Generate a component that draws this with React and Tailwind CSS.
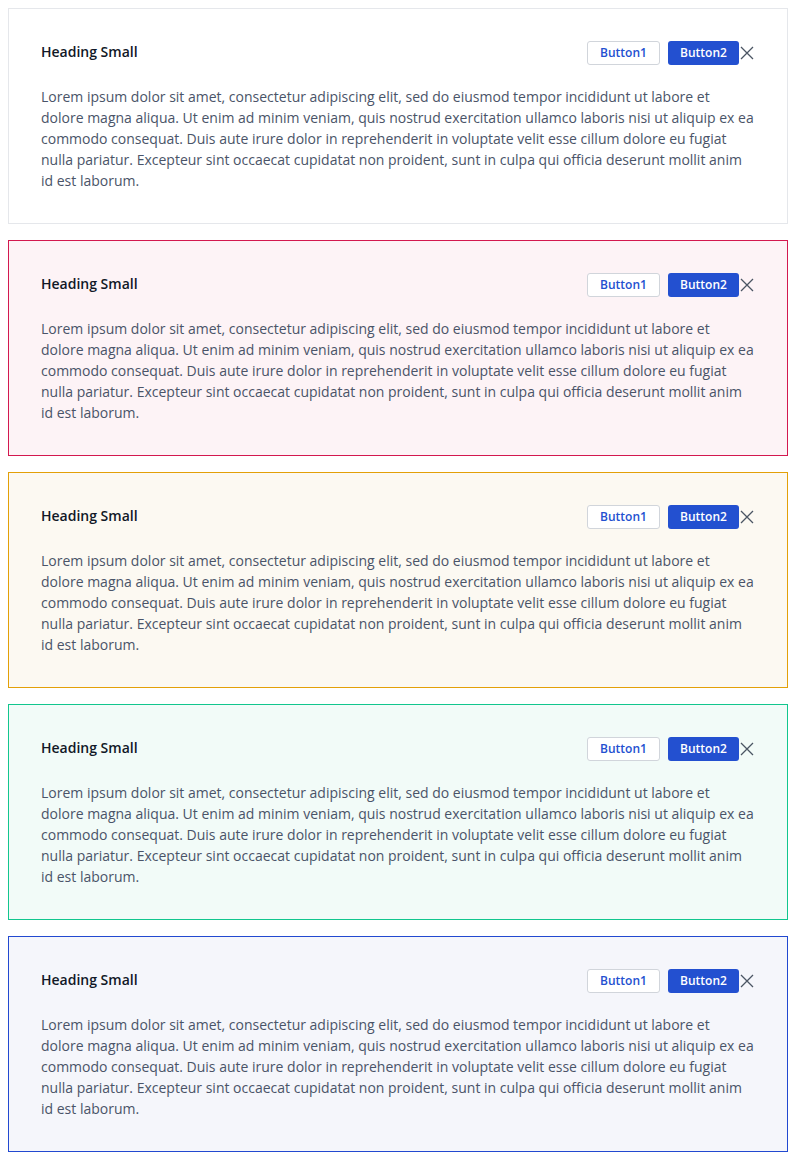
import React from "react";

const LOREM =
  "Lorem ipsum dolor sit amet, consectetur adipiscing elit, sed do eiusmod tempor incididunt ut labore et dolore magna aliqua. Ut enim ad minim veniam, quis nostrud exercitation ullamco laboris nisi ut aliquip ex ea commodo consequat. Duis aute irure dolor in reprehenderit in voluptate velit esse cillum dolore eu fugiat nulla pariatur. Excepteur sint occaecat cupidatat non proident, sunt in culpa qui officia deserunt mollit anim id est laborum.";

// one entry per alert variant
const VARIANTS = [
  { id: "default", box: "border-[#e5e7eb] bg-white" },
  { id: "danger", box: "border-[#d3184f] bg-[#fdf3f6]" },
  { id: "warning", box: "border-[#e3a008] bg-[#fcf9f2]" },
  { id: "success", box: "border-[#12c68e] bg-[#f2fbf8]" },
  { id: "info", box: "border-[#2249d0] bg-[#f5f6fb]" },
];

function CloseIcon() {
  return (
    <svg width="16" height="16" viewBox="0 0 16 16" fill="none" stroke="#4b5563" strokeWidth="1.3">
      <path d="M2 2 L14 14 M14 2 L2 14" />
    </svg>
  );
}

function Alert({ box }) {
  return (
    <div className={`border p-8 ${box}`}>
      <div className="flex items-start justify-between h-[24px]">
        <h3 className="text-[14px] leading-[22px] font-semibold text-[#111827]">Heading Small</h3>
        <div className="flex items-center">
          <button className="h-[24px] w-[73px] rounded-[3px] border border-[#d1d5db] bg-white text-[12px] font-semibold text-[#2350d0]">
            Button1
          </button>
          <button className="ml-2 h-[24px] w-[71px] rounded-[3px] bg-[#2350d0] text-[12px] font-semibold text-white">
            Button2
          </button>
          <span className="flex items-center">
            <CloseIcon />
          </span>
        </div>
      </div>
      <p className="mt-[21px] text-[14px] leading-[21px] text-[#4a5468]">{LOREM}</p>
    </div>
  );
}

export default function App() {
  return (
    <div
      className="bg-white p-2 flex flex-col gap-4"
      style={{ fontFamily: '"Open Sans", sans-serif' }}
    >
      {VARIANTS.map((v) => (
        <Alert key={v.id} box={v.box} />
      ))}
    </div>
  );
}
